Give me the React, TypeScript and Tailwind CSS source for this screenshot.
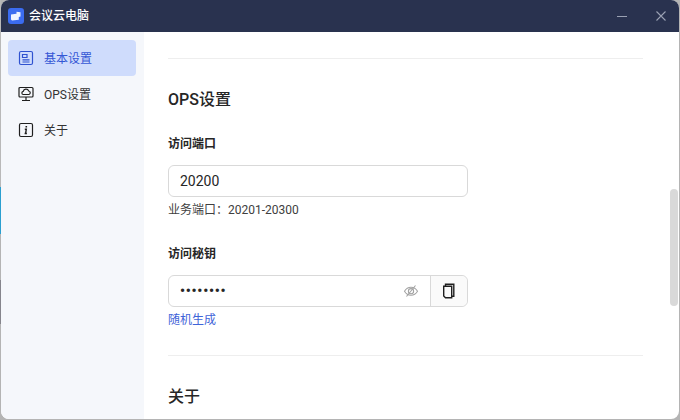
function Eye() {
  return (
    <svg width="16" height="16" viewBox="0 0 16 16" fill="none" stroke="#a3a3a3" strokeWidth="1.100">
      <path d="M1.500 8.200C3 5.600 5.300 4.200 8 4.200s5 1.400 6.500 4c-1.500 2.600-3.800 4-6.500 4s-5-1.400-6.500-4z" />
      <circle cx="8" cy="8.200" r="2.600" />
      <path d="M12.500 2.500 3.500 13.500" />
    </svg>
  );
}

function Copy() {
  return (
    <svg width="14" height="16" viewBox="0 0 14 16" fill="none" stroke="#1f1f1f" strokeWidth="1.400">
      <path d="M3.500 3V1.200h8.300v12H10" />
      <path d="M1.700 3.300h8v11.500H3.500L1.700 13z" />
    </svg>
  );
}

function NavBasic() {
  return (
    <svg width="16" height="16" viewBox="0 0 16 16" fill="none" stroke="#2f52d0" strokeWidth="1.200">
      <rect x="1.500" y="1.500" width="13" height="13" rx="1.500" />
      <path d="M4.500 4.500h4.500v3H4.500zM4.500 9.800h7M4.500 12h7" />
    </svg>
  );
}

function NavOps() {
  return (
    <svg width="16" height="16" viewBox="0 0 16 16" fill="none" stroke="#1f1f1f" strokeWidth="1.200">
      <rect x="1" y="1.500" width="14" height="9.500" rx="1" />
      <path d="M5 8.500a1.600 1.600 0 0 1 .2-3.100A2.900 2.900 0 0 1 10.700 5a1.800 1.800 0 0 1 .3 3.500z" />
      <path d="M8 11v3M4 14.500h8" />
    </svg>
  );
}

function NavAbout() {
  return (
    <svg width="16" height="16" viewBox="0 0 16 16" fill="none" stroke="#1f1f1f" strokeWidth="1.200">
      <rect x="1.500" y="1.500" width="13" height="13" rx="1.500" />
      <path d="M8.300 4v1.500" strokeWidth="1.600" />
      <path d="M6.800 7.200h1.500L7.600 11.500H6.600M7.600 11.500h1.300" strokeWidth="1.400" />
    </svg>
  );
}

function Logo() {
  return (
    <div className="flex h-4 w-4 items-center justify-center rounded-[3px] bg-[#3b6cf0]">
      <svg width="12" height="12" viewBox="0 0 12 12">
        <path d="M1 4.500 6.500 3.800V1.800L10.500 2.200V6.500L8.800 7V9.800L2 10.500 1 9.500z" fill="#eef3ff" />
      </svg>
    </div>
  );
}

function NavItem({ icon, label, active }: { icon: React.ReactNode; label: string; active?: boolean }) {
  return (
    <div
      className={
        active
          ? "flex h-9 items-center gap-[10px] rounded-[4px] bg-[#cfdcfc] pl-[10px] text-[12px] text-[#3457d5]"
          : "flex h-9 items-center gap-[10px] rounded-[4px] pl-[10px] text-[12px] text-[#333333]"
      }
    >
      {icon}
      <span className="pt-[2px]">{label}</span>
    </div>
  );
}

export default function App() {
  return (
    <div
      className="relative flex h-[420px] w-[680px] overflow-hidden bg-[#b4b4b4] pb-px pr-px text-[#262626]"
      style={{ fontFamily: 'Roboto, "Noto Sans CJK SC", sans-serif' }}
    >
      <div className="flex w-px shrink-0 flex-col">
        <div className="h-[187px] bg-[#b9b9b9]" />
        <div className="h-[47px] bg-[#2a9fd0]" />
        <div className="h-[46px] bg-[#b4b4b4]" />
        <div className="h-[44px] bg-[#85858c]" />
        <div className="flex-1 bg-[#b4b4b4]" />
      </div>
      <div className="flex min-w-0 flex-1 flex-col overflow-hidden rounded-[8px] bg-white">
        <div className="flex h-8 shrink-0 items-center bg-[#29324f] pl-[7px] pr-[13px]">
          <Logo />
          <span className="ml-[5px] text-[12px] font-medium text-white">会议云电脑</span>
          <div className="ml-auto flex items-center gap-[29px]">
            <div className="h-px w-[10px] bg-[#9aa1b3]" />
            <svg width="10" height="10" viewBox="0 0 10 10" stroke="#9aa1b3" strokeWidth="1.100">
              <path d="M.5.500l9 9M9.500.500l-9 9" />
            </svg>
          </div>
        </div>
        <div className="flex min-h-0 flex-1">
          <div className="flex w-[143px] shrink-0 flex-col bg-[#f5f7fb] pl-[7px] pr-2 pt-2">
            <NavItem icon={<NavBasic />} label="基本设置" active />
            <NavItem icon={<NavOps />} label="OPS设置" />
            <NavItem icon={<NavAbout />} label="关于" />
          </div>
          <div className="relative min-w-0 flex-1 overflow-hidden pl-6 pr-9 pt-[26px]">
            <div className="h-px bg-[#eeeeee]" />
            <h2 className="mt-[30px] text-[16px] font-medium leading-[22px] text-[#262626]">OPS设置</h2>
            <div className="mt-[24px] text-[12px] font-semibold leading-[18px]">访问端口</div>
            <div className="mt-3 flex h-8 w-[300px] items-center rounded-[6px] border border-[#d9d9d9] px-[11px] text-[14px]">
              20200
            </div>
            <div className="mt-[4px] text-[12px] leading-[18px] text-[#404040]">业务端口：20201-20300</div>
            <div className="mt-[26px] text-[12px] font-semibold leading-[18px]">访问秘钥</div>
            <div className="mt-3 flex h-8 w-[300px] items-center rounded-[6px] border border-[#d9d9d9]">
              <div className="flex flex-1 items-center pl-[11px] pr-[11px]">
                <span className="text-[14px] font-bold leading-none tracking-[0.75px]">••••••••</span>
                <span className="ml-auto flex">
                  <Eye />
                </span>
              </div>
              <div className="flex h-full w-[37px] items-center justify-center rounded-r-[6px] border-l border-[#d9d9d9] bg-[#fafafa]">
                <Copy />
              </div>
            </div>
            <div className="mt-[4px] text-[12px] leading-[18px] text-[#3f64d8]">随机生成</div>
            <div className="mt-[26px] h-px bg-[#eeeeee]" />
            <h2 className="mt-[30px] text-[16px] font-medium leading-[22px] text-[#262626]">关于</h2>
            <div className="absolute right-px top-[157px] h-[117px] w-2 rounded-full bg-[#d9d9d9]" />
          </div>
        </div>
      </div>
    </div>
  );
}
